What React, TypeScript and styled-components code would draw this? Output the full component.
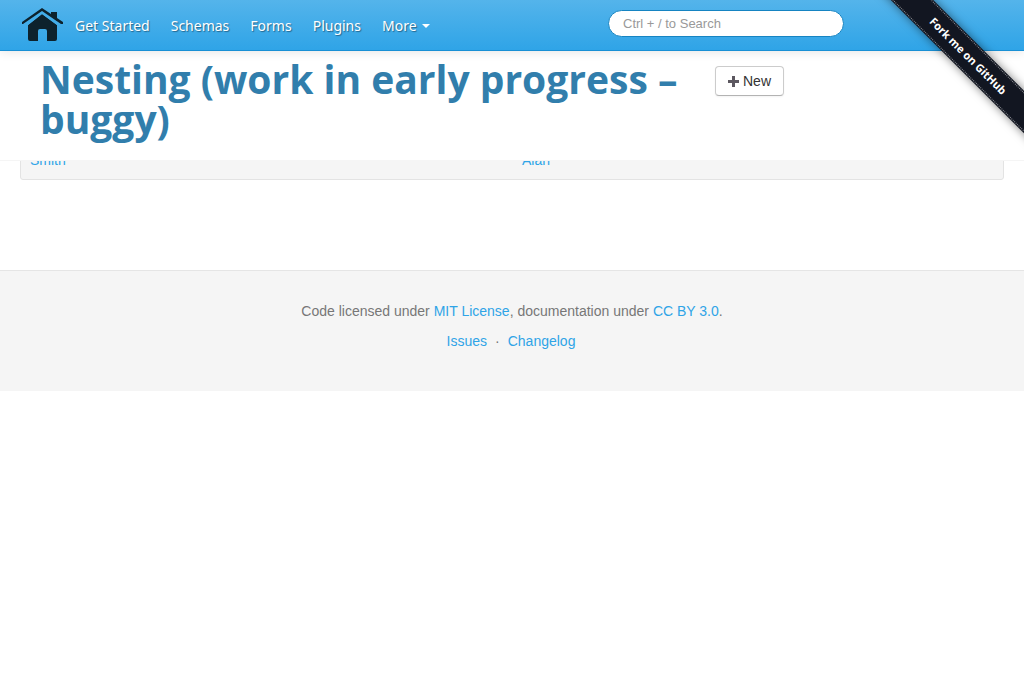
import React from "react";
import styled, { createGlobalStyle } from "styled-components";

const GlobalStyle = createGlobalStyle`
  *, *::before, *::after { box-sizing: border-box; }
  body {
    margin: 0;
    background: #fff;
    color: #777;
    font: 14px/20px Helvetica, "Liberation Sans", Arial, sans-serif;
    overflow-x: hidden;
  }
  a { color: #2fa4e7; text-decoration: none; }
`;

const TopArea = styled.div`
  position: relative;
  z-index: 2;
`;

const Navbar = styled.header`
  position: relative;
  z-index: 1;
  display: flex;
  align-items: center;
  justify-content: space-between;
  height: 51px;
  padding: 0 180px 0 20px;
  background: linear-gradient(#54b4eb, #2fa4e7 50px);
  border-bottom: 1px solid #1990d5;
  box-shadow: 0 1px 10px rgba(0, 0, 0, 0.1);
`;

const NavGroup = styled.nav`
  display: flex;
  align-items: center;
`;

const HomeLink = styled.a`
  display: flex;
  margin-right: 12px;
`;

const NavItem = styled.a`
  display: flex;
  align-items: center;
  gap: 5px;
  margin-right: 21px;
  padding-top: 2px;
  color: #fff;
  font: 14px/20px "Noto Sans", sans-serif;
  text-shadow: 1px 1px 1px rgba(0, 0, 0, 0.4);
`;

const Caret = styled.span`
  border: 4px solid transparent;
  border-top-color: #fff;
  border-bottom: 0;
`;

const Search = styled.input`
  width: 236px;
  height: 27px;
  margin-bottom: 4px;
  padding: 0 14px;
  border: 1px solid #1684c2;
  border-radius: 14px;
  background: #fff;
  color: #555;
  font: 13px/18px Helvetica, "Liberation Sans", Arial, sans-serif;
  &::placeholder { color: #999; opacity: 1; }
`;

const PageHeader = styled.div`
  display: grid;
  grid-template-columns: minmax(0, 655fr) minmax(0, 289fr);
  column-gap: 20px;
  padding: 8px 20px 21px 40px;
  background: #fff;
  border-bottom: 1px solid #f5f5f5;
`;

const Title = styled.h1`
  margin: 0;
  color: #317eac;
  font: 700 39px/40px "Open Sans", "Noto Sans", sans-serif;
`;

const NewButton = styled.button`
  display: flex;
  align-items: center;
  justify-self: start;
  gap: 4px;
  height: 30px;
  margin-top: 7px;
  padding: 0 12px;
  border: 1px solid #bbb;
  border-color: #ccc #ccc #b3b3b3;
  border-radius: 4px;
  background: #fff;
  color: #333;
  font: 14px/20px Helvetica, "Liberation Sans", Arial, sans-serif;
  box-shadow: 0 1px 2px rgba(0, 0, 0, 0.05);
`;

const RibbonClip = styled.div`
  position: absolute;
  z-index: 3;
  top: 0;
  right: 0;
  width: 150px;
  height: 150px;
  overflow: hidden;
  pointer-events: none;
`;

const Ribbon = styled.a`
  position: absolute;
  top: 41px;
  left: -26px;
  width: 240px;
  padding: 1px 0;
  background: #121621;
  box-shadow: 0 0 10px rgba(0, 0, 0, 0.5);
  transform: rotate(45deg);
  pointer-events: auto;
`;

const RibbonText = styled.span`
  display: block;
  border: 1px dotted #8b8d93;
  border-width: 1px 0;
  color: #fff;
  font: 700 11px/26px "Open Sans", "Noto Sans", sans-serif;
  text-align: center;
`;

const Content = styled.main`
  padding: 0 20px;
`;

const Well = styled.div`
  display: grid;
  grid-template-columns: 1fr 1fr;
  column-gap: 20px;
  margin: -21px 0 90px;
  padding: 9px;
  border: 1px solid #e3e3e3;
  border-radius: 3px;
  background: #f5f5f5;
`;

const Footer = styled.footer`
  padding: 30px 0 40px;
  border-top: 1px solid #e5e5e5;
  background: #f5f5f5;
  text-align: center;
`;

const License = styled.p`
  margin: 0 0 10px;
`;

const FooterLinks = styled.div`
  display: flex;
  justify-content: center;
  gap: 8px;
  padding-right: 2px;
`;

const HomeIcon = () => (
  <svg width="43" height="36" viewBox="0 0 43 36" fill="#0d222d" aria-hidden="true">
    <path d="M31 5h6v9l-6-5z" />
    <path d="M22 7 L37 18 V32 Q37 34 35 34 H27 V24 Q27 22 25 22 H20 Q18 22 18 24 V34 H10 Q8 34 8 32 V18 Z" />
    <path d="M22 4 L38 15 L37 18 L22 7 L8 18 L6 15 Z" fill="#43ade9" />
    <path d="M22 1 L43 15 V17 H41 L22 4 L3 17 H2 V15 Z" />
  </svg>
);

const PlusIcon = () => (
  <svg width="11" height="11" viewBox="0 0 11 11" fill="#5c5860" aria-hidden="true">
    <path d="M4 0h3v4h4v3H7v4H4V7H0V4h4z" />
  </svg>
);

export default function App() {
  return (
    <>
      <GlobalStyle />
      <TopArea>
        <Navbar>
          <NavGroup>
            <HomeLink href="#home" aria-label="Home"><HomeIcon /></HomeLink>
            <NavItem href="#start">Get Started</NavItem>
            <NavItem href="#schemas">Schemas</NavItem>
            <NavItem href="#forms">Forms</NavItem>
            <NavItem href="#plugins">Plugins</NavItem>
            <NavItem href="#more">More <Caret /></NavItem>
          </NavGroup>
          <Search type="search" placeholder="Ctrl + / to Search" aria-label="Search" />
        </Navbar>
        <PageHeader>
          <Title>Nesting (work in early progress – buggy)</Title>
          <NewButton type="button"><PlusIcon />New</NewButton>
        </PageHeader>
        <RibbonClip>
          <Ribbon href="#github"><RibbonText>Fork me on GitHub</RibbonText></Ribbon>
        </RibbonClip>
      </TopArea>
      <Content>
        <Well>
          <a href="#smith">Smith</a>
          <a href="#alan">Alan</a>
        </Well>
      </Content>
      <Footer>
        <License>
          Code licensed under <a href="#mit">MIT License</a>, documentation under <a href="#cc">CC BY 3.0</a>.
        </License>
        <FooterLinks>
          <a href="#issues">Issues</a>
          <span>·</span>
          <a href="#changelog">Changelog</a>
        </FooterLinks>
      </Footer>
    </>
  );
}
